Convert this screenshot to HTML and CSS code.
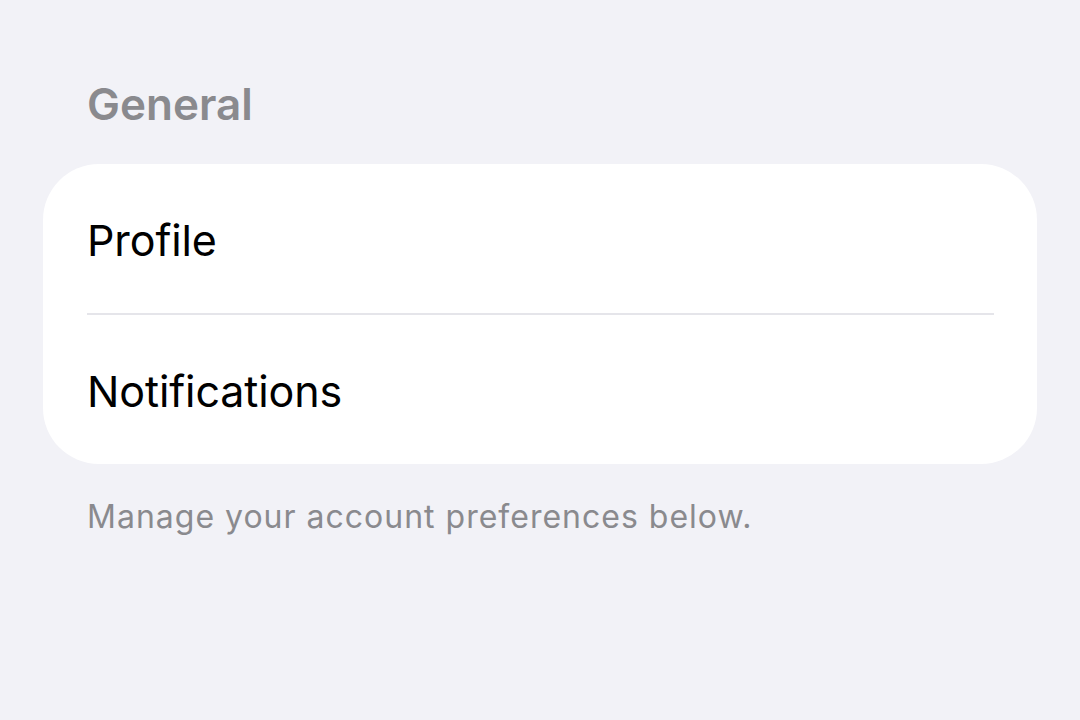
FILE: index.html
```html
<!DOCTYPE html>
<html>
<head>
<meta charset="utf-8">
<link rel="stylesheet" href="styles.css">
</head>
<body>
<div class="page">
  <div class="section-header">General</div>
  <div class="card">
    <div class="row"><span class="label">Profile</span></div>
    <div class="sep"></div>
    <div class="row"><span class="label">Notifications</span></div>
  </div>
  <div class="section-footer">Manage your account preferences below.</div>
</div>
</body>
</html>
```
FILE: styles.css
```css
html, body {
  margin: 0;
  padding: 0;
  background: #f2f2f7;
  width: 1080px;
  height: 720px;
  overflow: hidden;
}
.page {
  padding: 76px 43px 0 43px;
  font-family: Inter, "Noto Sans", sans-serif;
}
.section-header {
  padding-left: 44px;
  font-size: 44px;
  font-weight: 600;
  color: #8a8a8e;
  line-height: 56px;
  height: 56px;
  margin-bottom: 32px;
}
.card {
  background: #ffffff;
  border-radius: 56px;
  width: 994px;
  overflow: hidden;
}
.row {
  height: 147px;
  display: flex;
  align-items: center;
  padding-left: 44px;
  padding-top: 2px;
}
.label {
  font-size: 43px;
  color: #000000;
  font-weight: 400;
  letter-spacing: -0.1px;
}
.sep {
  height: 2px;
  background: #e5e5ea;
  margin-left: 44px;
  margin-right: 43px;
}
.section-footer {
  padding-left: 44px;
  margin-top: 33px;
  font-size: 32px;
  color: #8a8a8e;
  letter-spacing: 1px;
}
```
